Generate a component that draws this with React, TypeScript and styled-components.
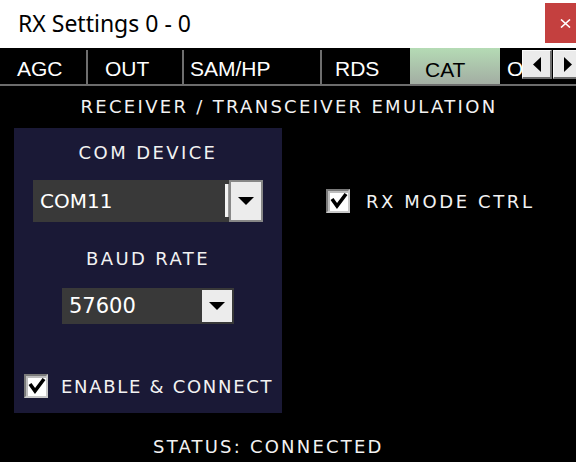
import * as React from 'react';
import styled, { createGlobalStyle } from 'styled-components';

const GlobalStyle = createGlobalStyle`
  html, body {
    margin: 0;
    padding: 0;
    background: #000;
  }
  * {
    box-sizing: border-box;
  }
`;

const Window = styled.div`
  width: 576px;
  height: 462px;
  display: flex;
  flex-direction: column;
  background: #000;
  overflow: hidden;
`;

const TitleBar = styled.div`
  height: 48px;
  flex: none;
  background: #fff;
  display: flex;
  align-items: flex-start;
  justify-content: space-between;
`;

const Title = styled.span`
  font-family: 'Noto Sans', sans-serif;
  font-size: 23px;
  line-height: 48px;
  color: #000;
  padding-left: 18px;
  margin-top: -1px;
`;

const CloseButton = styled.div`
  width: 31px;
  height: 40px;
  margin-top: 3px;
  background: #c4403f;
  display: flex;
  align-items: center;
  justify-content: flex-end;
  padding-right: 5px;
`;

const TabBar = styled.div`
  height: 38px;
  flex: none;
  display: flex;
  background: #000;
  border-bottom: 2px solid #6c6c6c;
`;

const TabList = styled.div`
  flex: 1;
  display: flex;
  overflow: hidden;
`;

const Tab = styled.div<{ $width: number; $pad: number; $active?: boolean; $divider?: boolean }>`
  flex: none;
  width: ${(p) => p.$width}px;
  margin-top: ${(p) => (p.$active ? 0 : 2)}px;
  margin-bottom: ${(p) => (p.$active ? -1 : 0)}px;
  padding-left: ${(p) => p.$pad}px;
  padding-top: ${(p) => (p.$active ? 6 : 4)}px;
  display: flex;
  align-items: center;
  font-family: 'Liberation Sans', Arial, sans-serif;
  font-size: 21px;
  color: ${(p) => (p.$active ? '#000' : '#fff')};
  background: ${(p) => (p.$active ? 'linear-gradient(#b5dbb5, #a2aca2)' : 'transparent')};
  border-right: ${(p) => (p.$divider ? '2px solid #6e6e6e' : 'none')};
  white-space: nowrap;
`;

const ScrollButtons = styled.div`
  flex: none;
  display: flex;
  gap: 1px;
  padding-top: 2px;
  height: 31px;
  margin-right: -7px;
`;

const ScrollButton = styled.div`
  width: 30px;
  height: 29px;
  background: #ebebeb;
  border-style: solid;
  border-width: 1px 2px 2px 1px;
  border-color: #fafafa #6f6f6f #6f6f6f #fafafa;
  display: flex;
  align-items: center;
  justify-content: center;
`;

const Content = styled.div`
  flex: 1;
  display: flex;
  flex-direction: column;
  padding-top: 10px;
  font-family: 'DejaVu Sans', Verdana, sans-serif;
  color: #f2f2f2;
`;

const Heading = styled.div`
  font-size: 18px;
  line-height: 22px;
  letter-spacing: 2.3px;
  text-align: center;
  padding-left: 2px;
`;

const Body = styled.div`
  display: flex;
  margin-top: 10px;
  padding-left: 14px;
`;

const Panel = styled.div`
  width: 268px;
  height: 285px;
  background: #1a1936;
  display: flex;
  flex-direction: column;
  align-items: center;
  padding: 14px 10px 15px;
`;

const Label = styled.div<{ $gap: number }>`
  font-size: 18px;
  line-height: 22px;
  letter-spacing: 2.4px;
  margin-top: ${(p) => p.$gap}px;
  margin-bottom: ${(p) => (p.$gap === 0 ? 16 : 18)}px;
`;

const Combo = styled.div<{ $width: number; $height: number }>`
  width: ${(p) => p.$width}px;
  height: ${(p) => p.$height}px;
  background: #393939;
  display: flex;
  align-items: stretch;
`;

const ComboText = styled.span<{ $size: number }>`
  flex: 1;
  display: flex;
  align-items: center;
  padding-left: 7px;
  font-size: ${(p) => p.$size}px;
  color: #fff;
`;

const Caret = styled.span`
  width: 4px;
  margin: 4px 0 5px;
  background: #f4f4f4;
  border-right: 1px solid #9a9a9a;
`;

const DropButton = styled.div<{ $framed?: boolean }>`
  width: ${(p) => (p.$framed ? 34 : 30)}px;
  margin: ${(p) => (p.$framed ? '0' : '2px 2px 2px 0')};
  background: #ececec;
  border: ${(p) => (p.$framed ? '2px solid #878787' : 'none')};
  display: flex;
  align-items: center;
  justify-content: center;
`;

const CheckRow = styled.div<{ $gap: number; $spacing: number }>`
  display: flex;
  align-items: center;
  gap: ${(p) => p.$gap}px;
  font-size: 18px;
  letter-spacing: ${(p) => p.$spacing}px;
  white-space: nowrap;
`;

const CheckBox = styled.span`
  flex: none;
  width: 24px;
  height: 24px;
  background: #fff;
  border: 2px solid;
  border-color: #7a7a7a #c9c9c9 #c9c9c9 #7a7a7a;
  box-shadow: inset 2px 2px 0 #bdbdbd;
  display: flex;
`;

const PanelFooter = styled.div`
  margin-top: auto;
  align-self: stretch;
`;

const SideColumn = styled.div`
  padding-left: 44px;
  padding-top: 61px;
`;

const Status = styled.div`
  margin-top: 23px;
  padding-left: 153px;
  font-size: 18px;
  line-height: 22px;
  letter-spacing: 2.2px;
`;

const DownArrow = () => (
  <svg width="16" height="8" viewBox="0 0 16 8">
    <polygon points="0,0 16,0 8,8" fill="#000" />
  </svg>
);

const SideArrow = ({ dir }: { dir: 'left' | 'right' }) => (
  <svg width="8" height="15" viewBox="0 0 8 15">
    <polygon points={dir === 'left' ? '8,0 8,15 0,7.5' : '0,0 0,15 8,7.5'} fill="#000" />
  </svg>
);

const Check = ({ label, gap, spacing }: { label: string; gap: number; spacing: number }) => (
  <CheckRow $gap={gap} $spacing={spacing}>
    <CheckBox>
      <svg width="20" height="20" viewBox="0 0 20 20">
        <polyline points="4,8 9,15 18,3" fill="none" stroke="#000" strokeWidth="3.6" />
      </svg>
    </CheckBox>
    {label}
  </CheckRow>
);

const tabs = [
  { name: 'AGC', width: 88, pad: 17, divider: true },
  { name: 'OUT', width: 96, pad: 17, divider: true },
  { name: 'SAM/HP', width: 138, pad: 6, divider: true },
  { name: 'RDS', width: 88, pad: 13 },
  { name: 'CAT', width: 90, pad: 15, active: true },
  { name: 'O', width: 30, pad: 7 },
];

export default function App() {
  return (
    <Window>
      <GlobalStyle />
      <TitleBar>
        <Title>RX Settings 0 - 0</Title>
        <CloseButton>
          <svg width="11" height="9" viewBox="0 0 11 9">
            <path d="M1 0.5 L10 8.5 M10 0.5 L1 8.5" stroke="#fff" strokeWidth="1.6" />
          </svg>
        </CloseButton>
      </TitleBar>
      <TabBar>
        <TabList>
          {tabs.map((t) => (
            <Tab key={t.name} $width={t.width} $pad={t.pad} $active={t.active} $divider={t.divider}>
              {t.name}
            </Tab>
          ))}
        </TabList>
        <ScrollButtons>
          <ScrollButton>
            <SideArrow dir="left" />
          </ScrollButton>
          <ScrollButton>
            <SideArrow dir="right" />
          </ScrollButton>
        </ScrollButtons>
      </TabBar>
      <Content>
        <Heading>RECEIVER / TRANSCEIVER EMULATION</Heading>
        <Body>
          <Panel>
            <Label $gap={0}>COM DEVICE</Label>
            <Combo $width={230} $height={42}>
              <ComboText $size={20}>COM11</ComboText>
              <Caret />
              <DropButton $framed>
                <DownArrow />
              </DropButton>
            </Combo>
            <Label $gap={26}>BAUD RATE</Label>
            <Combo $width={172} $height={36}>
              <ComboText $size={21}>57600</ComboText>
              <DropButton>
                <DownArrow />
              </DropButton>
            </Combo>
            <PanelFooter>
              <Check label="ENABLE & CONNECT" gap={13} spacing={1.7} />
            </PanelFooter>
          </Panel>
          <SideColumn>
            <Check label="RX MODE CTRL" gap={16} spacing={2.6} />
          </SideColumn>
        </Body>
        <Status>STATUS: CONNECTED</Status>
      </Content>
    </Window>
  );
}
